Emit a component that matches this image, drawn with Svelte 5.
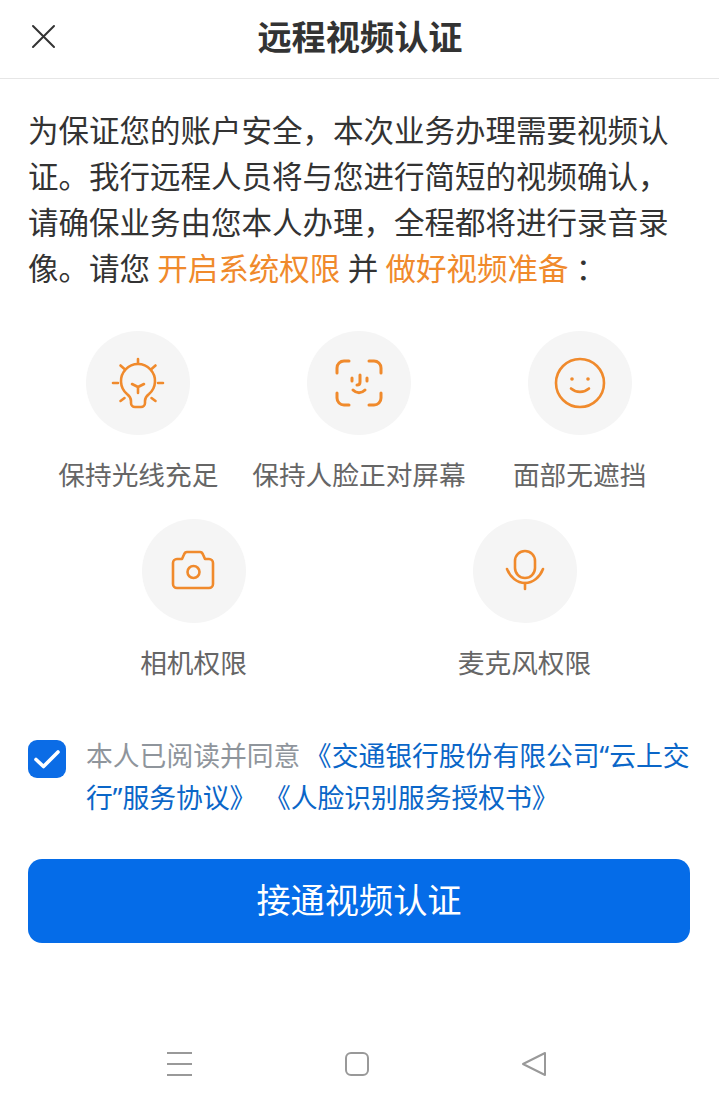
<script>
  const row1 = [
    { label: '保持光线充足', icon: 'bulb' },
    { label: '保持人脸正对屏幕', icon: 'face' },
    { label: '面部无遮挡', icon: 'smile' }
  ];
  const row2 = [
    { label: '相机权限', icon: 'camera' },
    { label: '麦克风权限', icon: 'mic' }
  ];
</script>

{#snippet tip(item)}
  <div class="tip">
    <div class="circle">
      <svg viewBox="0 0 56 56" width="56" height="56" fill="none" stroke="#f08a2c" stroke-width="2.6" stroke-linecap="round" stroke-linejoin="round">
        {#if item.icon === 'bulb'}
          <path d="M21 46c0-3-1.500-5-4-7a17 17 0 1 1 22 0c-2.500 2-4 4-4 7v2a4 4 0 0 1-4 4h-6a4 4 0 0 1-4-4z" />
          <path d="M22 29l6 3 6-3M28 32v6" />
          <path d="M28 4v4M10.500 10.500l4 3.500M45.500 10.500l-4 3.500M3 28h5M48 28h5M10.500 46l4-3M45.500 46l-4-3" />
        {:else if item.icon === 'face'}
          <path stroke-width="3" d="M6 18v-5a7 7 0 0 1 7-7h5M38 6h5a7 7 0 0 1 7 7v5M6 38v5a7 7 0 0 0 7 7h5M50 38v5a7 7 0 0 1-7 7h-5" />
          <path stroke-width="3" d="M21 23v3M36 23v3M29 20v7c0 2-1 3-3 3" />
          <path stroke-width="3" d="M22 35c3.500 3.500 8.500 3.500 12 0" />
        {:else if item.icon === 'smile'}
          <circle cx="28" cy="28" r="24" />
          <circle cx="20" cy="24" r="1.800" fill="#f08a2c" stroke="none" />
          <circle cx="36" cy="24" r="1.800" fill="#f08a2c" stroke="none" />
          <path d="M19 33.500c5 4.500 13 4.500 18 0" />
        {:else if item.icon === 'camera'}
          <path d="M11 16h5l2-4.500c.5-1.500 1.500-2.500 3-2.500h13c1.500 0 2.500 1 3 2.500l2 4.500h4a4 4 0 0 1 4 4v21a4 4 0 0 1-4 4H11a4 4 0 0 1-4-4V20a4 4 0 0 1 4-4z" />
          <circle cx="27.500" cy="29" r="6" />
        {:else}
          <rect x="18" y="8" width="20" height="27" rx="10" />
          <path d="M10 26c3 8 10 14 18 14s15-6 18-14" />
          <path d="M28 40v6" />
        {/if}
      </svg>
    </div>
    <div class="label">{item.label}</div>
  </div>
{/snippet}

<div class="page">
  <header class="header">
    <svg class="close" viewBox="0 0 25 25" width="25" height="25" fill="none" stroke="#333" stroke-width="2" stroke-linecap="round">
      <path d="M2 2l21 21M23 2L2 23" />
    </svg>
    <h1>远程视频认证</h1>
  </header>

  <main class="content">
    <p class="intro">为保证您的账户安全，本次业务办理需要视频认证。我行远程人员将与您进行简短的视频确认，请确保业务由您本人办理，全程都将进行录音录像。请您 <span class="hl">开启系统权限</span> 并 <span class="hl">做好视频准备</span> ：</p>

    <div class="row three">
      {#each row1 as item}{@render tip(item)}{/each}
    </div>
    <div class="row two">
      {#each row2 as item}{@render tip(item)}{/each}
    </div>

    <div class="agree">
      <div class="check">
        <svg viewBox="0 0 38 38" width="38" height="38" fill="none" stroke="#fff" stroke-width="3.600" stroke-linecap="round" stroke-linejoin="round">
          <path d="M8 19.500l7.500 7L30 12" />
        </svg>
      </div>
      <p>本人已阅读并同意 <span class="link">《交通银行股份有限公司“云上交行”服务协议》</span> <span class="link second">《人脸识别服务授权书》</span></p>
    </div>

    <button class="cta">接通视频认证</button>
  </main>

  <nav class="sysnav">
    <svg viewBox="0 0 26 26" width="26" height="26" fill="none" stroke="#999" stroke-width="2">
      <path d="M0 2h25M0 13h25M0 24h25" />
    </svg>
    <svg viewBox="0 0 26 26" width="26" height="26" fill="none" stroke="#999" stroke-width="2">
      <rect x="2" y="2" width="22" height="22" rx="5" />
    </svg>
    <svg viewBox="0 0 26 26" width="26" height="26" fill="none" stroke="#999" stroke-width="2" stroke-linejoin="round">
      <path d="M24 2v22L2 13z" />
    </svg>
  </nav>
</div>

<style>
  :global(body) {
    margin: 0;
    background: #fff;
  }
  .page {
    width: 719px;
    height: 1107px;
    display: flex;
    flex-direction: column;
    font-family: "Noto Sans CJK SC", "Noto Sans", sans-serif;
    overflow: hidden;
  }
  .header {
    position: relative;
    height: 78px;
    border-bottom: 1px solid #e6e6e6;
    display: flex;
    align-items: center;
    justify-content: center;
    flex: none;
  }
  .close {
    position: absolute;
    left: 31px;
    top: 24px;
  }
  h1 {
    margin: -6px 0 0;
    padding-left: 1px;
    font-size: 34.200px;
    font-weight: 700;
    color: #333;
    line-height: 1.2;
  }
  .content {
    padding: 27px 29px 0 28px;
    flex: 1;
  }
  .intro {
    margin: 0;
    font-size: 30.500px;
    line-height: 46px;
    color: #333;
    height: 184px;
    word-spacing: 0.500px;
  }
  .hl {
    color: #f08a2c;
  }
  .row {
    display: flex;
  }
  .three {
    margin-top: 41px;
  }
  .three .tip {
    width: 33.333%;
  }
  .two {
    margin-top: 26px;
  }
  .two .tip {
    width: 50%;
  }
  .tip {
    display: flex;
    flex-direction: column;
    align-items: center;
  }
  .circle {
    width: 104px;
    height: 104px;
    border-radius: 50%;
    background: #f5f5f5;
    display: flex;
    align-items: center;
    justify-content: center;
  }
  .label {
    margin-top: 20px;
    font-size: 26.700px;
    line-height: 38px;
    color: #666;
    white-space: nowrap;
  }
  .agree {
    margin-top: 49px;
    display: flex;
    gap: 20px;
  }
  .check {
    flex: none;
    width: 38px;
    height: 38px;
    margin-top: 10px;
    border-radius: 9px;
    background: #0b6ce6;
  }
  .check svg {
    display: block;
  }
  .agree p {
    margin: 5px -2px 0 0;
    font-family: "Noto Sans", "Noto Sans CJK SC", sans-serif;
    font-size: 26.800px;
    line-height: 42px;
    color: #8f959c;
    word-spacing: -2.500px;
  }
  .link {
    color: #0a66c8;
  }
  .second {
    margin-left: 3px;
  }
  .cta {
    display: block;
    width: 100%;
    height: 84px;
    margin-top: 40px;
    border: none;
    border-radius: 14px;
    background: #056ce8;
    color: #fff;
    font-family: inherit;
    font-size: 34.200px;
    padding: 0 0 6px;
  }
  .sysnav {
    flex: none;
    height: 56px;
    display: flex;
    justify-content: space-between;
    padding: 0 172px 0 167px;
  }
</style>
